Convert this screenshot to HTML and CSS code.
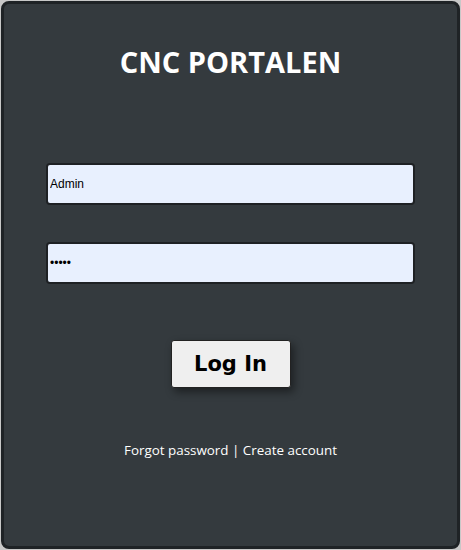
FILE: index.html
```html
<!DOCTYPE html>
<html>
<head>
<meta charset="utf-8">
<link rel="stylesheet" href="styles.css">
</head>
<body>
<main class="card">
  <h1 class="title">CNC PORTALEN</h1>
  <form class="form">
    <input class="field" type="text" value="Admin">
    <input class="field" type="password" value="admin">
    <button class="btn" type="button">Log In</button>
  </form>
  <p class="links">Forgot password | Create account</p>
</main>
</body>
</html>
```
FILE: styles.css
```css
html, body {
  margin: 0;
  padding: 0;
  background: #c8c8c8;
}
.card {
  box-sizing: border-box;
  margin: 1px;
  height: 548px;
  background: #343a3e;
  border: 3px solid #1f2326;
  border-radius: 8px;
  display: flex;
  flex-direction: column;
  align-items: center;
  padding: 40px 42px 0;
}
.title {
  margin: 0;
  font-family: "Open Sans", sans-serif;
  font-weight: 700;
  font-size: 29px;
  line-height: 36px;
  color: #fff;
}
.form {
  align-self: stretch;
  display: flex;
  flex-direction: column;
  align-items: center;
  margin-top: 83px;
}
.field {
  box-sizing: border-box;
  width: 100%;
  height: 42px;
  margin: 0 0 37px;
  padding: 0 2px;
  background: #e8f0fe;
  border: 2px solid #1e2124;
  border-radius: 4px;
  font-family: "Liberation Sans", Arial, sans-serif;
  font-size: 12px;
  color: #000;
  outline: none;
}
.field:last-of-type { margin-bottom: 0; }
.btn {
  margin-top: 56px;
  width: 120px;
  height: 48px;
  background: #efefef;
  border: 1px solid #222;
  border-radius: 3px;
  box-shadow: 3px 4px 8px rgba(0,0,0,0.45);
  font-family: "DejaVu Sans", Verdana, sans-serif;
  font-weight: 700;
  font-size: 21px;
  color: #000;
  padding: 0;
}
.links {
  margin: 52px 0 0;
  font-family: "Open Sans", sans-serif;
  font-size: 13.4px;
  line-height: 20px;
  color: #fff;
}
```
